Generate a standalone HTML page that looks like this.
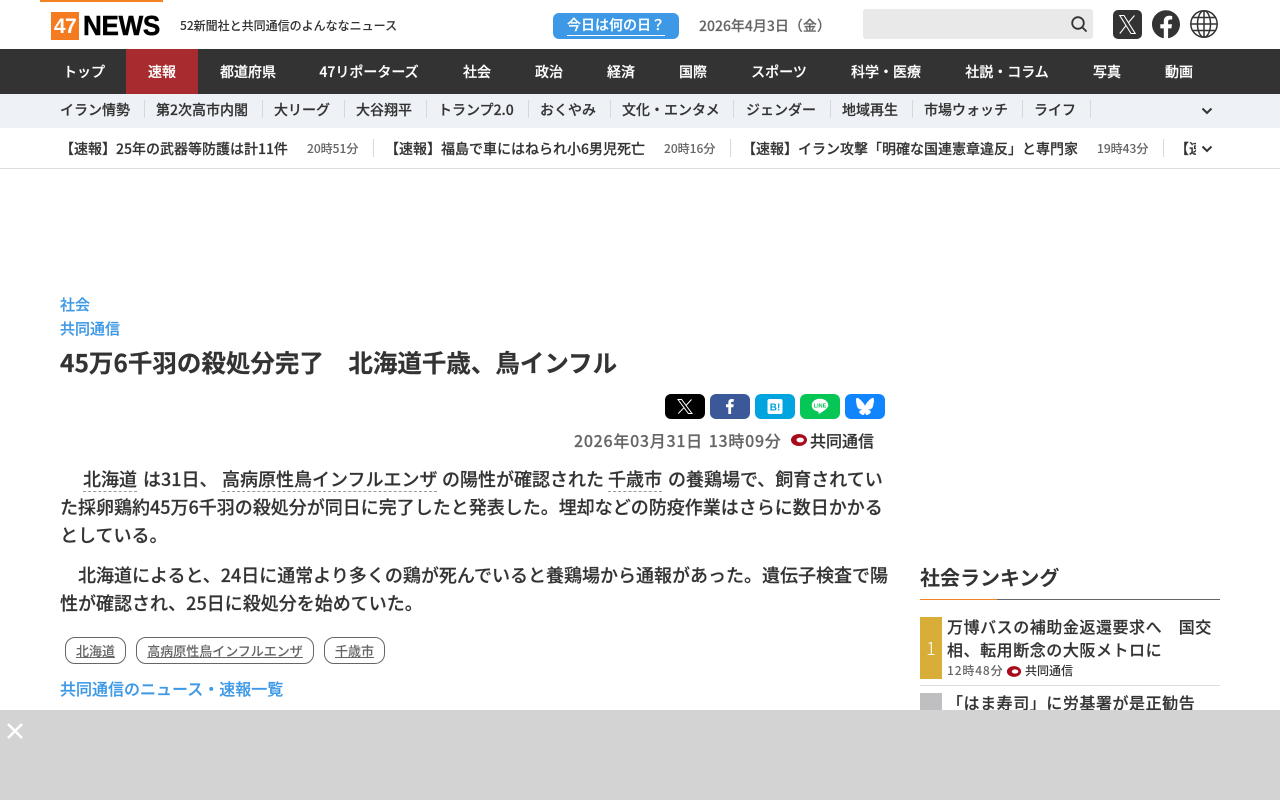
<!DOCTYPE html>
<html lang="ja"><head><meta charset="utf-8"><title>45万6千羽の殺処分完了 北海道千歳、鳥インフル</title>
<style>
*{box-sizing:border-box}
html,body{margin:0;padding:0;width:1280px;height:800px;overflow:hidden;background:#fff}
body{position:relative;font-family:"Noto Sans CJK JP",sans-serif;color:#333;font-weight:500;-webkit-text-stroke:.18px currentColor}
.a{position:absolute;white-space:nowrap}
.c{position:absolute;white-space:nowrap;transform:translateX(-50%)}
.sep{position:absolute;width:1px;background:#d5d8dc}
.nav{color:#fff;font-size:14px;line-height:20px;top:62px;font-weight:500}
.sub{font-size:14px;line-height:20px;top:100px;color:#333}
.tick{font-size:14px;line-height:20px;top:139px;color:#333}
.tm{font-size:12px;line-height:18px;top:140px;color:#666;-webkit-text-stroke:.05px currentColor}
.p{font-size:18px;line-height:29px;left:60px;color:#333}
.dot{text-decoration:underline dashed #999 1px;text-underline-offset:5px}
.tag{position:absolute;top:637px;height:27px;border:1px solid #666;border-radius:10px;font-size:13px;line-height:26px;color:#666;text-align:center;-webkit-text-stroke:.05px currentColor}
.tag span{text-decoration:underline}
.sh{position:absolute;top:394px;width:40px;height:25px;border-radius:6px}
.sh svg{position:absolute;left:0;top:0}
</style></head><body>

<div class="a" style="left:40px;top:0;width:123px;height:2px;background:#f58220"></div>
<div class="a" style="left:51px;top:12px;width:28px;height:28px;background:#f47b20;color:#fff;font:700 21px/29px 'Liberation Sans',sans-serif;text-align:center;letter-spacing:-.5px;-webkit-text-stroke:0">47</div>
<div class="a" style="left:83px;top:9px;font:700 28px/34px 'Liberation Sans',sans-serif;color:#000;transform-origin:0 50%;transform:scaleX(.93);letter-spacing:-.3px;-webkit-text-stroke:.5px #000">NEWS</div>
<div class="a" style="left:180px;top:17px;font-size:12px;line-height:18px;color:#333;-webkit-text-stroke:.05px #333">52新聞社と共同通信のよんななニュース</div>

<div class="a" style="left:553px;top:13px;width:126px;height:26px;background:#3d99e6;border-radius:6px"></div>
<div class="a" style="left:567px;top:16px;height:20px;font-size:14px;line-height:19px;color:#fff;border-bottom:1px solid #fff;width:98px">今日は何の日？</div>
<div class="a" style="left:699px;top:16px;font-size:14px;line-height:20px;color:#666">2026年4月3日（金）</div>

<div class="a" style="left:863px;top:9px;width:230px;height:30px;background:#e9e9e9;border-radius:3px"></div>
<svg class="a" style="left:1070px;top:15px" width="18" height="18" viewBox="0 0 18 18" fill="none" stroke="#333" stroke-width="1.800"><circle cx="8" cy="8" r="5.800"/><path d="M12.200 12.200l3.800 3.800" stroke-linecap="round"/></svg>

<svg class="a" style="left:1113px;top:10px" width="29" height="29" viewBox="0 0 29 29"><rect width="29" height="29" rx="5" fill="#333"/><path d="M6.800 5.500h4.200l11.200 18h-4.200zM21.500 5.500l-6.300 7.400M13.300 15.200L6.800 23.500" fill="none" stroke="#fff" stroke-width="1.100"/></svg>
<svg class="a" style="left:1152px;top:10px" width="28" height="29" viewBox="0 0 28 29"><path d="M28 14.300C28 6.500 21.700.2 14 .2S0 6.500 0 14.300c0 7 5.100 12.900 11.800 14V18.400H8.300v-4.100h3.500v-3.100c0-3.500 2.100-5.500 5.300-5.500 1.500 0 3.100.3 3.100.3v3.500h-1.800c-1.700 0-2.300 1.100-2.300 2.200v2.600h3.900l-.6 4.100h-3.300v9.900C22.900 27.200 28 21.300 28 14.300z" fill="#333"/></svg>
<svg class="a" style="left:1190px;top:10px" width="28" height="28" viewBox="0 0 28 28" fill="none" stroke="#333" stroke-width="1.500"><circle cx="14" cy="14" r="13.200"/><ellipse cx="14" cy="14" rx="6.500" ry="13.200"/><path d="M14 .7v26.600M.7 14h26.600M2.800 7.500h22.400M2.800 20.500h22.400"/></svg>

<div class="a" style="left:0;top:49px;width:1280px;height:45px;background:#333"></div>
<div class="a" style="left:126px;top:49px;width:72px;height:45px;background:#a82c2f"></div>
<div class="c nav" style="left:84px">トップ</div>
<div class="c nav" style="left:162px">速報</div>
<div class="c nav" style="left:248px">都道府県</div>
<div class="c nav" style="left:369px">47リポーターズ</div>
<div class="c nav" style="left:477px">社会</div>
<div class="c nav" style="left:549px">政治</div>
<div class="c nav" style="left:621px">経済</div>
<div class="c nav" style="left:693px">国際</div>
<div class="c nav" style="left:779px">スポーツ</div>
<div class="c nav" style="left:886px">科学・医療</div>
<div class="c nav" style="left:1007px">社説・コラム</div>
<div class="c nav" style="left:1107px">写真</div>
<div class="c nav" style="left:1179px">動画</div>

<div class="a" style="left:0;top:94px;width:1280px;height:34px;background:#eef1f6"></div>
<div class="a sub" style="left:60px">イラン情勢</div><div class="sep" style="left:144px;top:100px;height:18px"></div>
<div class="a sub" style="left:156px">第2次高市内閣</div><div class="sep" style="left:262px;top:100px;height:18px"></div>
<div class="a sub" style="left:274px">大リーグ</div><div class="sep" style="left:344px;top:100px;height:18px"></div>
<div class="a sub" style="left:356px">大谷翔平</div><div class="sep" style="left:426px;top:100px;height:18px"></div>
<div class="a sub" style="left:438px">トランプ2.0</div><div class="sep" style="left:528px;top:100px;height:18px"></div>
<div class="a sub" style="left:540px">おくやみ</div><div class="sep" style="left:610px;top:100px;height:18px"></div>
<div class="a sub" style="left:622px">文化・エンタメ</div><div class="sep" style="left:733px;top:100px;height:18px"></div>
<div class="a sub" style="left:746px">ジェンダー</div><div class="sep" style="left:830px;top:100px;height:18px"></div>
<div class="a sub" style="left:842px">地域再生</div><div class="sep" style="left:912px;top:100px;height:18px"></div>
<div class="a sub" style="left:924px">市場ウォッチ</div><div class="sep" style="left:1022px;top:100px;height:18px"></div>
<div class="a sub" style="left:1034px">ライフ</div><div class="sep" style="left:1090px;top:100px;height:18px"></div>
<svg class="a" style="left:1201px;top:106px" width="12" height="10" viewBox="0 0 12 10" fill="none" stroke="#333" stroke-width="2"><path d="M1.500 2.500l4.500 4.500 4.500-4.500"/></svg>

<div class="a tick" style="left:60px">【速報】25年の武器等防護は計11件</div><div class="a tm" style="left:307px">20時51分</div><div class="sep" style="left:373px;top:139px;height:18px"></div>
<div class="a tick" style="left:385px">【速報】福島で車にはねられ小6男児死亡</div><div class="a tm" style="left:664px">20時16分</div><div class="sep" style="left:730px;top:139px;height:18px"></div>
<div class="a tick" style="left:742px">【速報】イラン攻撃「明確な国連憲章違反」と専門家</div><div class="a tm" style="left:1097px">19時43分</div><div class="sep" style="left:1163px;top:139px;height:18px"></div>
<div class="a tick" style="left:1175px;width:21px;overflow:hidden">【速報】</div>
<svg class="a" style="left:1201px;top:144px" width="12" height="10" viewBox="0 0 12 10" fill="none" stroke="#333" stroke-width="2"><path d="M1.500 2.500l4.500 4.500 4.500-4.500"/></svg>
<div class="a" style="left:0;top:168px;width:1280px;height:1px;background:#ddd"></div>

<div class="a" style="left:60px;top:294px;font-size:15px;line-height:22px;color:#3d99e6">社会</div>
<div class="a" style="left:60px;top:318px;font-size:15px;line-height:22px;color:#3d99e6">共同通信</div>
<div class="a" style="left:60px;top:345px;font-size:24.500px;line-height:36px;font-weight:700;color:#333">45万6千羽の殺処分完了　北海道千歳、鳥インフル</div>

<div class="sh" style="left:665px;background:#000"><svg width="40" height="25" viewBox="0 0 40 25"><path d="M13 5.500h3.600l10.400 14h-3.600zM26.500 5.500l-5.500 6M18.800 13.800L13.300 19.500" fill="none" stroke="#fff" stroke-width="1"/></svg></div>
<div class="sh" style="left:710px;background:#3b5998"><svg width="40" height="25" viewBox="0 0 40 25"><path d="M18.300 20v-6.800H16v-2.900h2.300V8.500c0-2.300 1.300-3.500 3.400-3.500h2v2.700h-1.300c-1 0-1.300.5-1.300 1.300v1.300h2.600l-.4 2.900h-2.200V20z" fill="#fff"/></svg></div>
<div class="sh" style="left:755px;background:#00a4de"><svg width="40" height="25" viewBox="0 0 40 25"><rect x="12.500" y="5" width="15" height="15" rx="2" fill="#fff"/><text x="20" y="16.500" font-family="Liberation Sans,sans-serif" font-weight="700" font-size="10" text-anchor="middle" fill="#00a4de" style="-webkit-text-stroke:0">B!</text></svg></div>
<div class="sh" style="left:800px;background:#06c755"><svg width="40" height="25" viewBox="0 0 40 25"><path d="M20 4.800c-4.700 0-8.300 2.900-8.300 6.500 0 3.200 2.700 5.800 6.500 6.300.6.100.3 1.200.3 1.800 0 .5.500.5 1 .2 1.300-.7 4-2.400 6.200-4.300 1.500-1.300 2.600-2.400 2.600-4 0-3.600-3.600-6.500-8.300-6.500z" fill="#fff"/><text x="20" y="13.700" font-family="Liberation Sans,sans-serif" font-weight="700" font-size="5.500" text-anchor="middle" fill="#06c755" style="-webkit-text-stroke:0">LINE</text></svg></div>
<div class="sh" style="left:845px;background:#1185fe"><svg width="40" height="25" viewBox="0 0 40 25"><path d="M20 11.700c-1-2-3.800-5.700-6.400-7.300-2.200-1.400-2.600.4-2.600 1.800 0 1.200.7 5 1.100 6.300.9 3 3.900 3.300 6 3-3.500.5-5.300 2.300-2.500 4.400 4 3 4.300-.8 4.400-2.500.1 1.700.4 5.500 4.400 2.500 2.800-2.100 1-3.900-2.500-4.400 2.100.3 5.100 0 6-3 .4-1.300 1.100-5.100 1.100-6.300 0-1.400-.4-3.200-2.600-1.800-2.600 1.600-5.400 5.300-6.400 7.300z" fill="#fff"/></svg></div>

<div class="a" style="left:574px;top:430px;font-size:16px;line-height:20px;color:#666;letter-spacing:.72px;word-spacing:1.500px">2026年03月31日 13時09分</div>
<svg class="a" style="left:790px;top:433px" width="18" height="14" viewBox="0 0 18 14"><ellipse cx="9" cy="7" rx="8" ry="6" fill="#a80b19"/><ellipse cx="10.200" cy="7" rx="3.700" ry="2.400" fill="#fff"/></svg>
<div class="a" style="left:810px;top:430px;font-size:16px;line-height:20px;color:#333">共同通信</div>

<div class="a p" style="top:465px;left:83px"><span class="dot">北海道</span></div>
<div class="a p" style="top:465px;left:143px">は31日、</div>
<div class="a p" style="top:465px;left:222px"><span class="dot">高病原性鳥インフルエンザ</span></div>
<div class="a p" style="top:465px;left:442px">の陽性が確認された</div>
<div class="a p" style="top:465px;left:608px"><span class="dot">千歳市</span></div>
<div class="a p" style="top:465px;left:668px">の養鶏場で、飼育されてい</div>
<div class="a p" style="top:493px">た採卵鶏約45万6千羽の殺処分が同日に完了したと発表した。埋却などの防疫作業はさらに数日かかる</div>
<div class="a p" style="top:521px">としている。</div>
<div class="a p" style="top:561px;left:78px">北海道によると、24日に通常より多くの鶏が死んでいると養鶏場から通報があった。遺伝子検査で陽</div>
<div class="a p" style="top:589px">性が確認され、25日に殺処分を始めていた。</div>

<div class="tag" style="left:65px;width:61px"><span>北海道</span></div>
<div class="tag" style="left:136px;width:178px"><span>高病原性鳥インフルエンザ</span></div>
<div class="tag" style="left:324px;width:61px"><span>千歳市</span></div>
<div class="a" style="left:60px;top:677px;font-size:16px;line-height:22px;color:#3d99e6">共同通信のニュース・速報一覧</div>

<div class="a" style="left:920px;top:562px;font-size:20px;line-height:30px;font-weight:700;color:#333;-webkit-text-stroke:0">社会ランキング</div>
<div class="a" style="left:920px;top:599px;width:300px;height:1px;background:#666"></div>
<div class="a" style="left:920px;top:599px;width:77px;height:1px;background:#f58220"></div>
<div class="a" style="left:920px;top:617px;width:22px;height:62px;background:#d8ad38;color:#fff;font-size:18px;line-height:62px;text-align:center;font-weight:300;-webkit-text-stroke:0">1</div>
<div class="a" style="left:947px;top:615px;font-size:16px;line-height:23px;color:#333;letter-spacing:.55px">万博バスの補助金返還要求へ　国交<br>相、転用断念の大阪メトロに</div>
<div class="a" style="left:947px;top:662px;font-size:12px;line-height:18px;color:#666;letter-spacing:.85px;-webkit-text-stroke:0">12時48分</div>
<svg class="a" style="left:1006px;top:665px" width="16" height="13" viewBox="0 0 18 14"><ellipse cx="9" cy="7" rx="8" ry="6" fill="#a80b19"/><ellipse cx="10.200" cy="7" rx="3.700" ry="2.400" fill="#fff"/></svg>
<div class="a" style="left:1025px;top:662px;font-size:12px;line-height:18px;color:#333;-webkit-text-stroke:0">共同通信</div>
<div class="a" style="left:920px;top:685px;width:300px;height:1px;background:#ddd"></div>
<div class="a" style="left:920px;top:693px;width:22px;height:20px;background:#bfbfc1"></div>
<div class="a" style="left:947px;top:691px;font-size:16px;line-height:23px;color:#333;letter-spacing:.55px">「はま寿司」に労基署が是正勧告</div>

<div class="a" style="left:0;top:710px;width:1280px;height:90px;background:#d3d3d3"></div>
<svg class="a" style="left:6px;top:722px" width="18" height="18" viewBox="0 0 18 18" stroke="#fff" stroke-width="2.500"><path d="M2 2l14 14M16 2L2 16"/></svg>
</body></html>
